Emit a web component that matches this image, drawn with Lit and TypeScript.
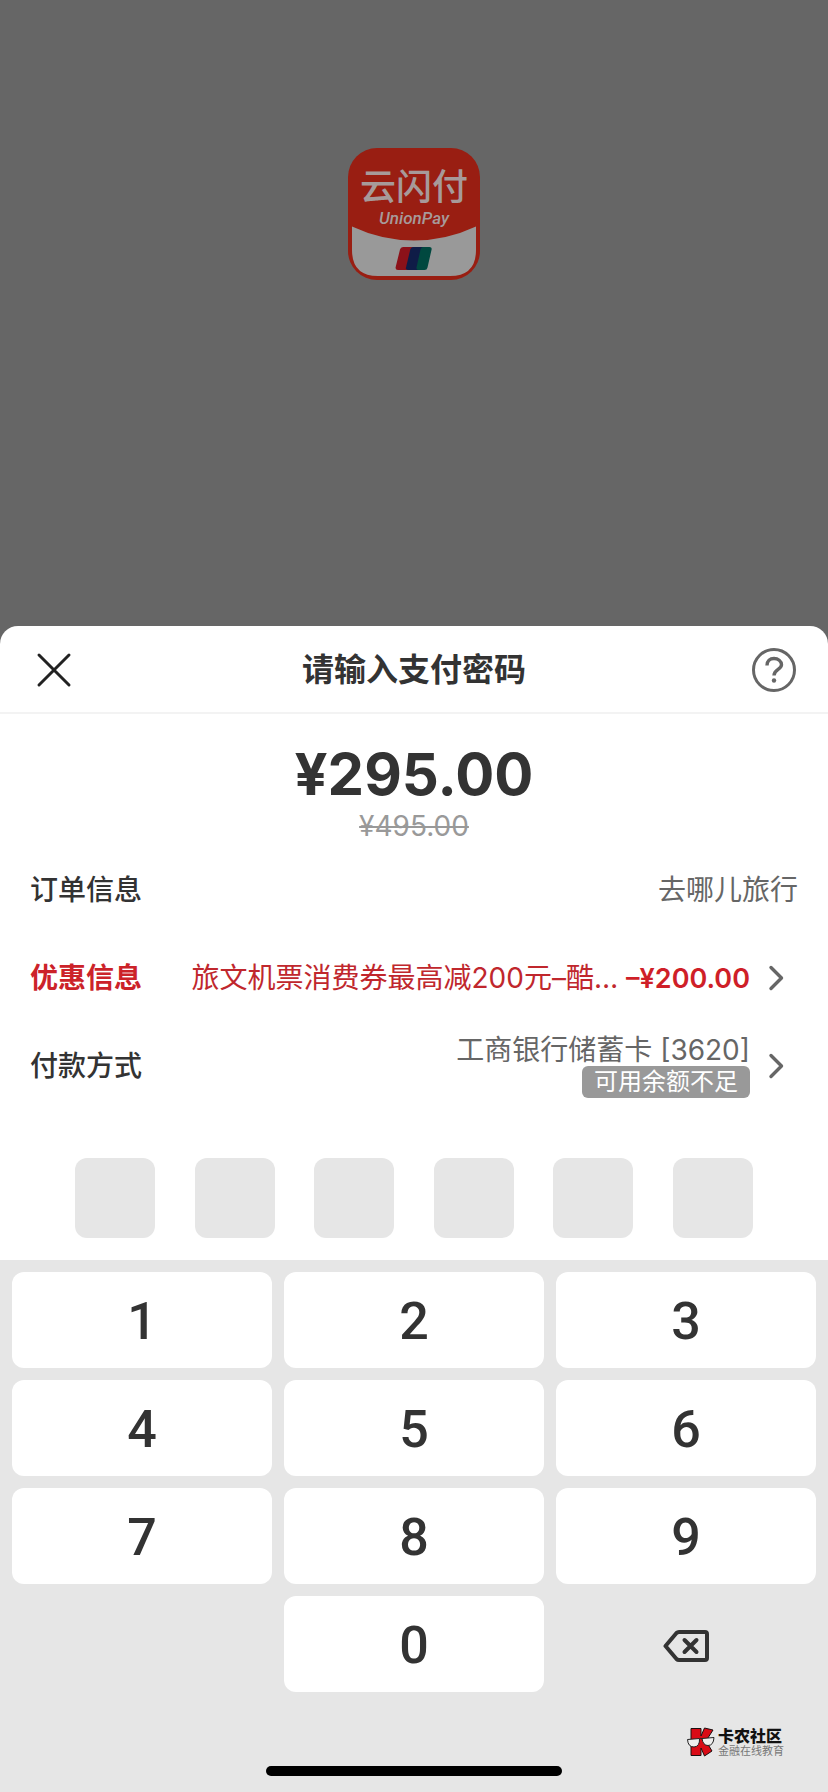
import { LitElement, html, css, svg } from "lit";
import { customElement, state } from "lit/decorators.js";

const chevron = html`<svg class="chevron" viewBox="0 0 16 26" width="16" height="26" aria-hidden="true">
  <path d="M3 2.5 13.500 13 3 23.5" fill="none" stroke="#666" stroke-width="3.400" stroke-linecap="round" stroke-linejoin="round" />
</svg>`;

@customElement("union-logo")
class UnionLogo extends LitElement {
  static styles = css`
    :host { display: block; }
    svg { display: block; }
    .name { font: 500 36px "Noto Sans CJK SC", sans-serif; }
    .latin { font: italic 500 17px Roboto, sans-serif; }
  `;
  render() {
    return html`<svg width="132" height="132" viewBox="0 0 132 132" role="img" aria-label="云闪付 UnionPay">
      ${svg`
      <rect width="132" height="132" rx="29" fill="#991e12" />
      <path d="M4 78.5Q34 92.500 66 92.500T128 78.500V102Q128 128 102 128H30Q4 128 4 102Z" fill="#999" />
      <text class="name" x="66" y="52" text-anchor="middle" fill="#a79a9a">云闪付</text>
      <text class="latin" x="66" y="76" text-anchor="middle" fill="#a79a9a">UnionPay</text>
      <path d="M55 99H66L60 122H50Q47 122 47.700 119L52 101.500Q52.600 99 55 99Z" fill="#8c1119" />
      <path d="M65 99H78L71 122H60Q57.500 122 58 119.500L62.300 101.500Q63 99 65 99Z" fill="#0f1c47" />
      <path d="M75 99H81.500Q84.200 99 83.600 101.500L79.500 119.500Q79 122 76.500 122H70.500Q68 122 68.500 119.500L72.500 101.500Q73 99 75 99Z" fill="#00483f" />`}
    </svg>`;
  }
}

@customElement("pin-pad")
class PinPad extends LitElement {
  static styles = css`
    :host { display: block; }
    .pad {
      display: grid;
      grid-template-columns: repeat(3, 1fr);
      gap: 12px;
      padding: 12px 12px 0;
    }
    .key {
      height: 96px;
      padding: 4px 0 0;
      border: 0;
      border-radius: 12px;
      background: #fff;
      color: #333;
      font: 500 52px/92px Roboto, sans-serif;
    }
    .zero { grid-column: 2; }
    .erase {
      display: flex;
      align-items: center;
      justify-content: center;
      background: none;
    }
  `;
  private press(key: string) {
    this.dispatchEvent(new CustomEvent("key", { detail: key }));
  }
  render() {
    return html`<div class="pad">
      ${["1", "2", "3", "4", "5", "6", "7", "8", "9"].map(
        (n) => html`<button class="key" @click=${() => this.press(n)}>${n}</button>`
      )}
      <button class="key zero" @click=${() => this.press("0")}>0</button>
      <button class="key erase" aria-label="删除" @click=${() => this.press("del")}>
        <svg width="46" height="32" viewBox="0 0 46 32" fill="none" stroke="#333" stroke-width="4" stroke-linejoin="round" stroke-linecap="round">
          <path d="M16 2H42Q44 2 44 4V28Q44 30 42 30H16Q14.500 30 13.500 29L2.500 16 13.500 3Q14.500 2 16 2Z" />
          <path d="M21.500 10 33.500 22M33.500 10 21.500 22" />
        </svg>
      </button>
    </div>`;
  }
}

@customElement("app-root")
class AppRoot extends LitElement {
  static styles = css`
    :host {
      display: flex;
      flex-direction: column;
      min-height: 100vh;
      background: #666;
      color: #333;
      font-family: Inter, "Noto Sans CJK SC", sans-serif;
      font-size: 28px;
      line-height: 36px;
    }
    button { font: inherit; color: inherit; }
    .backdrop {
      flex: 1;
      display: flex;
      justify-content: center;
      align-items: flex-start;
      padding: 148px 0;
    }
    .sheet {
      overflow: hidden;
      border-radius: 18px 18px 0 0;
      background: #fff;
    }
    .header {
      box-sizing: border-box;
      display: flex;
      align-items: center;
      justify-content: space-between;
      height: 88px;
      padding: 2px 32px 0;
      border-bottom: 2px solid #f3f3f3;
    }
    .icon-button {
      display: flex;
      padding: 0;
      border: 0;
      background: none;
    }
    .title {
      margin: 0;
      font-size: 32px;
      font-weight: 700;
      line-height: 44px;
    }
    .prices {
      display: flex;
      flex-direction: column;
      align-items: center;
      padding: 30px 0 2px;
    }
    .total {
      font-size: 58px;
      font-weight: 700;
      line-height: 60px;
    }
    .original {
      margin-top: 4px;
      color: #999;
      font-size: 28px;
    }
    .row {
      box-sizing: border-box;
      display: flex;
      align-items: center;
      width: 100%;
      height: 88px;
      padding: 0 30px;
      border: 0;
      background: none;
      text-align: right;
    }
    .link { padding-right: 44px; }
    .label { font-weight: 500; white-space: nowrap; }
    .value {
      flex: 1;
      min-width: 0;
      color: #666;
    }
    .promo { color: #cc2229; }
    .promo .value { color: #c0272d; }
    .promo strong { margin-left: 8px; font-size: 27px; font-weight: 600; color: #cf1f28; }
    .promo .label { font-weight: 700; }
    .chevron { margin-left: 18px; }
    .method {
      display: flex;
      flex-direction: column;
      align-items: flex-end;
      line-height: 32px;
    }
    .badge {
      padding: 0 12px;
      border-radius: 6px;
      background: #999;
      color: #fff;
      font-size: 24px;
    }
    .pin {
      display: flex;
      justify-content: space-between;
      margin: 0;
      padding: 48px 75px 22px;
      border: 0;
    }
    .cell {
      box-sizing: border-box;
      width: 80px;
      height: 80px;
      border: 0;
      border-radius: 12px;
      background: #e6e6e6;
      text-align: center;
      font-size: 40px;
    }
    .keyboard { background: #e6e6e6; }
    .brand {
      display: flex;
      justify-content: flex-end;
      align-items: center;
      gap: 2px;
      padding: 35px 44px 0 0;
    }
    .brand-name {
      color: #111;
      font-size: 16px;
      font-weight: 900;
      line-height: 18px;
    }
    .brand-sub {
      color: #777;
      font-size: 11px;
      line-height: 12px;
    }
    .home {
      width: 296px;
      height: 10px;
      margin: 0 auto;
      border-radius: 5px;
      background: #000;
    }
    .dock { padding: 9px 0 16px; }
  `;

  @state() private code = "";

  private onKey(e: CustomEvent<string>) {
    this.code = e.detail === "del" ? this.code.slice(0, -1) : (this.code + e.detail).slice(0, 6);
  }

  render() {
    return html`
      <div class="backdrop"><union-logo></union-logo></div>
      <main class="sheet">
        <header class="header">
          <button class="icon-button" aria-label="关闭">
            <svg width="44" height="44" viewBox="0 0 44 44" fill="none" stroke="#222" stroke-width="3" stroke-linecap="round">
              <path d="M7 7 37 37M37 7 7 37" />
            </svg>
          </button>
          <h1 class="title">请输入支付密码</h1>
          <button class="icon-button" aria-label="帮助">
            <svg width="44" height="44" viewBox="0 0 44 44" fill="none" stroke="#666" stroke-width="3">
              <circle cx="22" cy="22" r="20.500" />
              <path d="M15 17.500C15 13 18 10.500 22 10.500S29.500 13 29.500 16.800C29.500 21.500 22 21.500 22 27.500" stroke-width="3.400" />
              <circle cx="22" cy="32.500" r="2.200" fill="#666" stroke="none" />
            </svg>
          </button>
        </header>
        <section class="prices">
          <div class="total">¥295.00</div>
          <s class="original">¥495.00</s>
        </section>
        <section>
          <div class="row">
            <span class="label">订单信息</span>
            <span class="value">去哪儿旅行</span>
          </div>
          <button class="row link promo">
            <span class="label">优惠信息</span>
            <span class="value">旅文机票消费券最高减200元–酷…<strong>–¥200.00</strong></span>
            ${chevron}
          </button>
          <button class="row link">
            <span class="label">付款方式</span>
            <span class="value method">
              <span>工商银行储蓄卡 [3620]</span>
              <span class="badge">可用余额不足</span>
            </span>
            ${chevron}
          </button>
        </section>
        <fieldset class="pin" aria-label="支付密码">
          ${[0, 1, 2, 3, 4, 5].map(
            (i) => html`<input class="cell" type="password" readonly aria-label=${`第${i + 1}位`} .value=${this.code[i] ?? ""} />`
          )}
        </fieldset>
        <div class="keyboard">
          <pin-pad @key=${this.onKey}></pin-pad>
          <div class="brand">
            <svg width="30" height="30" viewBox="0 0 30 30" aria-hidden="true">
              <path d="M5 1.500H15V9L18.500 1 27 3 20 14 26 24 18.500 29 15 21V28.500H5Z" fill="#d90b16" stroke="#1a1010" />
              <path d="M1.500 12.500 13.500 11.500Q14 19.500 8 20Q2 20 1.500 12.500Z" fill="#eee" stroke="#222" />
              <path d="M16 11.500 28 10.500Q27.500 18.500 22 18.500Q17 18.500 16 11.500Z" fill="#eee" stroke="#222" />
              <path d="M13.500 12Q15 10.500 16 12" fill="none" stroke="#222" />
            </svg>
            <div>
              <div class="brand-name">卡农社区</div>
              <div class="brand-sub">金融在线教育</div>
            </div>
          </div>
          <div class="dock"><div class="home"></div></div>
        </div>
      </main>
    `;
  }
}
